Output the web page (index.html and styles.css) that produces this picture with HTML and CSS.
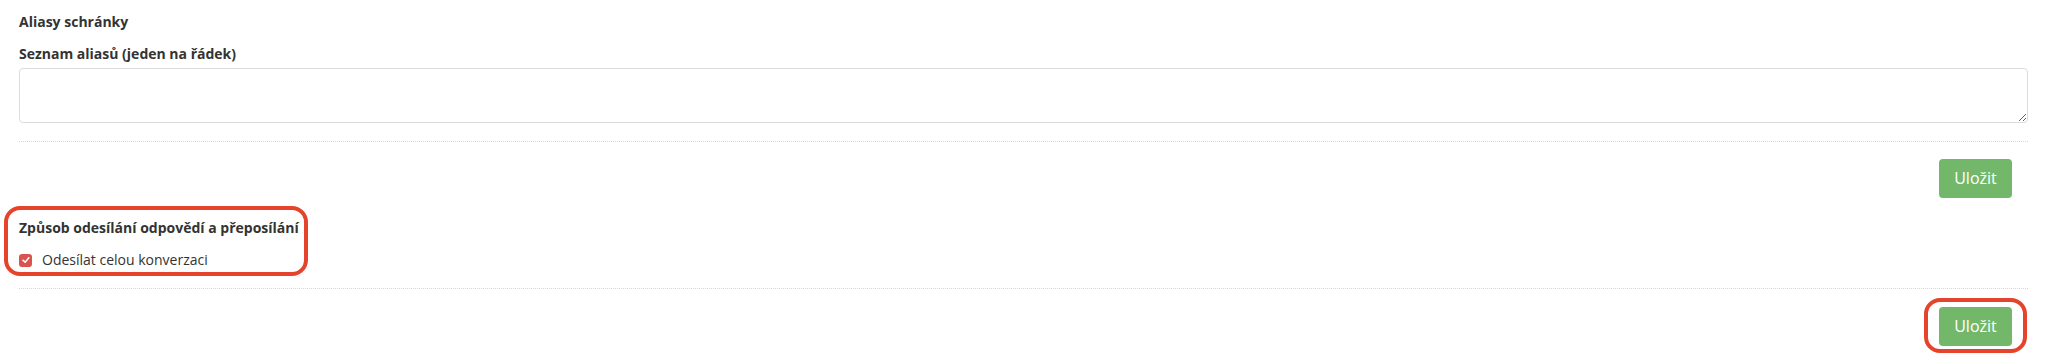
FILE: index.html
```html
<!DOCTYPE html>
<html lang="cs">
<head>
<meta charset="utf-8">
<title>Aliasy schránky</title>
<link rel="stylesheet" href="styles.css">
</head>
<body>
<div class="page">
  <div class="section-title">Aliasy schránky</div>
  <label class="field-label" for="aliases">Seznam aliasů (jeden na řádek)</label>
  <textarea id="aliases" class="textarea"></textarea>
  <div class="divider"></div>
  <div class="actions">
    <button class="btn-save" type="button">Uložit</button>
  </div>

  <div class="group">
    <div class="section-title">Způsob odesílání odpovědí a přeposílání</div>
    <label class="check-row">
      <span class="checkbox">
        <svg viewBox="0 0 14 14" width="10" height="10"><path d="M2.8 7.3 L5.8 10 L11 4" fill="none" stroke="#fff" stroke-width="2.2" stroke-linecap="round" stroke-linejoin="round"/></svg>
      </span>
      <span class="check-text">Odesílat celou konverzaci</span>
    </label>
    <span class="highlight highlight-group"></span>
  </div>
  <div class="divider divider-2"></div>
  <div class="actions actions-2">
    <span class="btn-wrap">
      <button class="btn-save" type="button">Uložit</button>
      <span class="highlight highlight-btn"></span>
    </span>
  </div>
</div>
</body>
</html>
```

FILE: styles.css
```css
* { box-sizing: border-box; }
html, body { margin: 0; padding: 0; background: #fff; }
body {
  font-family: "Open Sans", "Liberation Sans", sans-serif;
  font-size: 14px;
  color: #333;
}
.page {
  padding: 12px 20px 12px 19px;
  display: flex;
  flex-direction: column;
}
.section-title {
  font-weight: 700;
  font-size: 14px;
  line-height: 20px;
  color: #333;
}
.field-label {
  display: block;
  margin-top: 12px;
  font-weight: 700;
  font-size: 14px;
  line-height: 20px;
}
.textarea {
  display: block;
  margin-top: 4px;
  width: 100%;
  height: 55px;
  border: 1px solid #dcdcdc;
  border-radius: 4px;
  font-family: inherit;
  font-size: 14px;
  padding: 6px 10px;
  resize: vertical;
  background: #fff;
}
.divider {
  margin-top: 18px;
  height: 0;
  border-top: 1px dotted #d6d6d6;
}
.actions {
  display: flex;
  justify-content: flex-end;
  padding-right: 16px;
  margin-top: 17px;
}
.btn-save {
  display: block;
  width: 73px;
  height: 39px;
  border: 0;
  border-radius: 4px;
  background: #73b86a;
  color: #fff;
  font-family: "Open Sans", "Liberation Sans", sans-serif;
  font-size: 16px;
  line-height: 39px;
  padding: 0;
  cursor: pointer;
}
.group {
  position: relative;
  margin-top: 20px;
  align-self: flex-start;
}
.check-row {
  display: flex;
  align-items: center;
  gap: 10px;
  margin-top: 12px;
  line-height: 20px;
}
.checkbox {
  width: 13px;
  height: 13px;
  border-radius: 3px;
  background: #d9534f;
  display: inline-flex;
  align-items: center;
  justify-content: center;
}
.check-text { color: #333; }
.divider-2 { margin-top: 18px; }
.actions-2 { margin-top: 18px; }
.btn-wrap { position: relative; display: block; }
.highlight {
  position: absolute;
  border: 4px solid #e5432b;
  pointer-events: none;
}
.highlight-group {
  left: -15px;
  top: -12px;
  right: -9px;
  bottom: -6px;
  border-radius: 16px;
}
.highlight-btn {
  left: -15px;
  top: -9px;
  right: -15px;
  bottom: -7px;
  border-radius: 16px;
}
```
